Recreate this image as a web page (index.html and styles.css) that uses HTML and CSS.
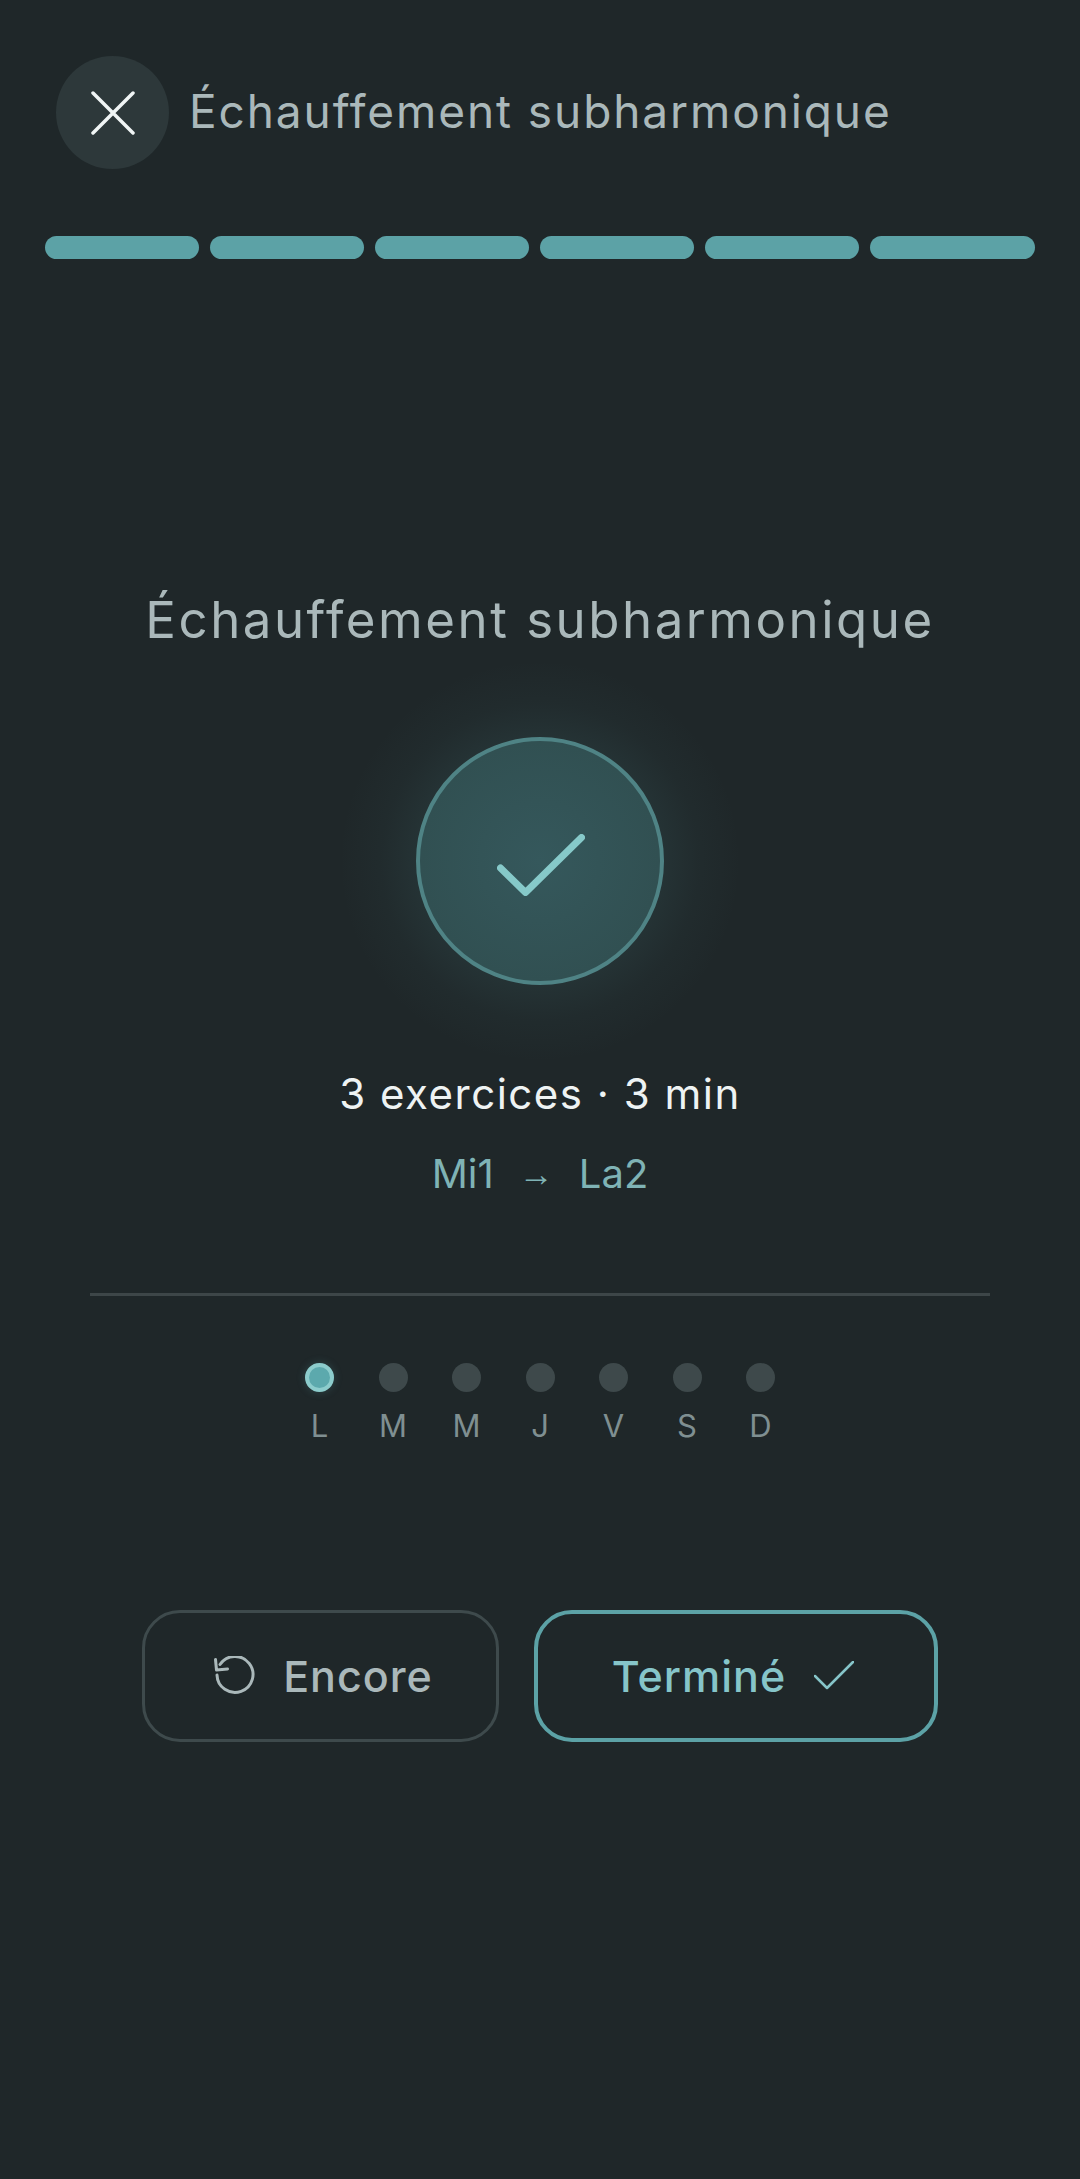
FILE: index.html
```html
<!DOCTYPE html>
<html lang="fr">
<head>
<meta charset="utf-8">
<title>Échauffement subharmonique</title>
<link rel="stylesheet" href="styles.css">
</head>
<body>
<main class="screen">
  <header class="topbar">
    <button class="close" aria-label="Fermer">
      <svg class="close-icon" viewBox="0 0 44 44"><path d="M2 2 42 42M42 2 2 42"/></svg>
    </button>
    <span class="top-title">Échauffement subharmonique</span>
  </header>
  <div class="progress">
    <span class="seg"></span><span class="seg"></span><span class="seg"></span><span class="seg"></span><span class="seg"></span><span class="seg seg-last"></span>
  </div>
  <section class="summary">
    <h1 class="title">Échauffement subharmonique</h1>
    <div class="halo">
      <div class="badge">
        <svg class="badge-check" viewBox="0 0 88 62"><path d="M3.500 34 28.500 58.500 84.500 3.500"/></svg>
      </div>
    </div>
    <p class="meta">3 exercices · 3 min</p>
    <p class="range"><span>Mi1</span><span class="arrow">→</span><span>La2</span></p>
  </section>
  <hr class="divider">
  <div class="week">
    <div class="day"><span class="dot dot-on"></span><span class="label">L</span></div>
    <div class="day"><span class="dot"></span><span class="label">M</span></div>
    <div class="day"><span class="dot"></span><span class="label">M</span></div>
    <div class="day"><span class="dot"></span><span class="label">J</span></div>
    <div class="day"><span class="dot"></span><span class="label">V</span></div>
    <div class="day"><span class="dot"></span><span class="label">S</span></div>
    <div class="day"><span class="dot"></span><span class="label">D</span></div>
  </div>
  <div class="actions">
    <button class="btn btn-again">
      <svg class="again-icon" viewBox="0 0 42 40"><path d="M7 8.500A18 18 0 1 1 4 19M2.500 3.500 3.500 14 14.500 13"/></svg>
      <span>Encore</span>
    </button>
    <button class="btn btn-done">
      <span>Terminé</span>
      <svg class="done-icon" viewBox="0 0 40 30"><path d="M1 15 13 27 39 1"/></svg>
    </button>
  </div>
</main>
</body>
</html>
```
FILE: styles.css
```css
* { box-sizing: border-box; }
html, body { margin: 0; padding: 0; }
body {
  background: #1f2729;
  font-family: "Inter", "Liberation Sans", sans-serif;
  width: 1080px;
  height: 2179px;
  overflow: hidden;
}
.screen { width: 1080px; height: 2179px; display: flex; flex-direction: column; }
.topbar { display: flex; align-items: center; gap: 20px; padding: 56px 0 0 56px; height: 169px; }
.close {
  width: 113px; height: 113px; border-radius: 50%; border: 0; padding: 0;
  background: #2d383a; display: flex; align-items: center; justify-content: center; flex: none;
}
.close-icon { width: 44px; height: 44px; fill: none; stroke: #f0f5f5; stroke-width: 3.500; stroke-linecap: round; }
.top-title { font-size: 46px; line-height: 54px; margin-top: -3px; letter-spacing: 1.900px; color: #aab8ba; white-space: nowrap; }
.progress { display: flex; gap: 11px; padding: 67px 45px 0; }
.seg { width: 154px; height: 23px; border-radius: 12px; background: #5ca2a6; flex: none; }
.seg-last { width: 165px; }
.summary { display: flex; flex-direction: column; align-items: center; padding-top: 331px; }
.title { margin: 0; font-size: 51px; line-height: 60px; font-weight: 400; letter-spacing: 2.500px; color: #aab8ba; white-space: nowrap; }
.halo {
  margin-top: 11px; width: 400px; height: 400px; display: flex; align-items: center; justify-content: center;
  background: radial-gradient(circle, rgba(92,162,166,.10) 42%, rgba(92,162,166,.035) 56%, rgba(92,162,166,0) 71%);
}
.badge {
  width: 248px; height: 248px; border-radius: 50%; border: 4px solid #4f8385;
  background: radial-gradient(circle, #35585c 0%, #315052 70%, #2f4e52 100%);
  display: flex; align-items: center; justify-content: center;
}
.badge-check { width: 88px; height: 62px; margin: 8px 0 0 2px; fill: none; stroke: #86c9c9; stroke-width: 7; stroke-linecap: round; stroke-linejoin: round; }
.meta { margin: 8px 0 0; font-size: 42px; line-height: 50px; letter-spacing: 1.500px; color: #eef3f3; }
.range { margin: 30px 0 0; display: flex; align-items: center; gap: 25px; font-size: 40px; line-height: 50px; color: #7fb3b5; }
.arrow { font-family: "Liberation Sans", sans-serif; font-size: 35px; line-height: 50px; }
.divider { margin: 94px 90px 0; border: 0; height: 3px; background: #3d4648; width: 900px; flex: none; }
.week { display: flex; justify-content: center; margin-top: 67px; }
.day { width: 73.500px; display: flex; flex-direction: column; align-items: center; gap: 17px; }
.dot { width: 29px; height: 29px; border-radius: 50%; background: #3e494b; }
.dot-on { background: #5ca9ad; border: 4px solid #8ccccc; box-shadow: 0 0 8px rgba(92,169,173,.25); }
.label { font-size: 31px; line-height: 34px; color: #7f8f91; }
.actions { display: flex; justify-content: center; gap: 35px; margin-top: 167px; }
.btn {
  height: 132px; border-radius: 38px; background: transparent; display: flex; align-items: center; justify-content: center;
  font-family: inherit; font-size: 43px; font-weight: 500; letter-spacing: 1px; padding: 0;
}
.btn-again { width: 357px; border: 3px solid #3e4a4c; color: #aab8ba; gap: 28px; padding-left: 5px; }
.btn-done { width: 404px; border: 4px solid #5ca2a6; color: #86c5c9; gap: 28px; padding-right: 6px; }
.again-icon { width: 42px; height: 40px; fill: none; stroke: #aab8ba; stroke-width: 3; stroke-linecap: round; stroke-linejoin: round; }
.done-icon { width: 40px; height: 30px; fill: none; stroke: #86c5c9; stroke-width: 2.500; stroke-linecap: round; stroke-linejoin: round; }
```
